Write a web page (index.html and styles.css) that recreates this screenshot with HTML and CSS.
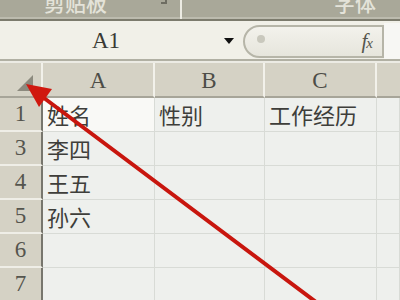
FILE: index.html
```html
<!DOCTYPE html>
<html>
<head>
<meta charset="utf-8">
<link rel="stylesheet" href="styles.css">
</head>
<body>
<div class="page">
  <div class="ribbon">
    <div class="group g1"><span class="glabel">剪贴板</span><span class="launch"></span></div>
    <div class="group g2"><span class="glabel">字体</span></div>
  </div>
  <div class="fbar">
    <div class="namebox"><span class="name">A1</span><span class="drop"></span></div>
    <div class="fxbox"><span class="knob"></span><span class="fx">f<span class="x">x</span></span></div>
    <div class="finput"></div>
  </div>
  <div class="gap"></div>
  <div class="grid">
    <div class="corner"></div>
    <div class="ch">A</div><div class="ch">B</div><div class="ch">C</div><div class="ch last"></div>

    <div class="rh">1</div><div class="c sel">姓名</div><div class="c">性别</div><div class="c">工作经历</div><div class="c"></div>
    <div class="rh">3</div><div class="c">李四</div><div class="c"></div><div class="c"></div><div class="c"></div>
    <div class="rh">4</div><div class="c">王五</div><div class="c"></div><div class="c"></div><div class="c"></div>
    <div class="rh">5</div><div class="c">孙六</div><div class="c"></div><div class="c"></div><div class="c"></div>
    <div class="rh">6</div><div class="c"></div><div class="c"></div><div class="c"></div><div class="c"></div>
    <div class="rh">7</div><div class="c"></div><div class="c"></div><div class="c"></div><div class="c"></div>
  </div>
  <svg class="arrow" width="400" height="300" viewBox="0 0 400 300">
    <line x1="40" y1="95" x2="320" y2="305" stroke="#c8160e" stroke-width="4" stroke-linecap="round"/>
    <polygon points="26,84 52,89 39,107" fill="#d0180f"/>
  </svg>
</div>
</body>
</html>
```
FILE: styles.css
```css
* { box-sizing: border-box; }
html, body { margin: 0; padding: 0; }
body { width: 400px; height: 300px; overflow: hidden; background: #eef0ed; }
.page { position: relative; width: 400px; height: 300px; overflow: hidden; }

.ribbon {
  display: flex;
  height: 21px;
  background: #a9a899;
  border-bottom: 2px solid #7c7b6d;
  box-shadow: inset 0 -2px 0 #bcbbae;
  overflow: hidden;
}
.group { display: flex; align-items: flex-start; height: 19px; overflow: hidden; }
.g1 { width: 182px; padding-left: 44px; border-right: 2px solid #ecebe3; position: relative; }
.g2 { flex: 1; justify-content: flex-end; padding-right: 24px; }
.glabel {
  font-family: "Noto Sans CJK SC", sans-serif;
  font-size: 21px;
  line-height: 22px;
  margin-top: -9px;
  color: #e4e3d9;
  font-weight: 500;
}
.launch {
  position: absolute;
  left: 161px; top: 0;
  width: 6px; height: 4px;
  border-right: 2px solid #6e6d62;
  border-bottom: 2px solid #6e6d62;
}

.fbar {
  display: flex;
  height: 40px;
  background: #f1f0e8;
  border-bottom: 2px solid #b1b0a3;
}
.namebox {
  width: 243px;
  display: flex;
  align-items: center;
  padding-top: 2px;
}
.name {
  width: 210px;
  text-align: center;
  font-family: "Liberation Serif", serif;
  font-size: 23px;
  color: #3a3a34;
  padding-left: 2px;
}
.drop {
  margin-left: 14px;
  width: 0; height: 0;
  border-left: 5px solid transparent;
  border-right: 5px solid transparent;
  border-top: 6px solid #111;
}
.fxbox {
  width: 141px;
  margin: 4px 0 0;
  height: 33px;
  border: 2px solid #b6b5a8;
  border-radius: 17px 0 0 17px;
  background: linear-gradient(#f3f2ec, #e6e5dc);
  display: flex;
  align-items: center;
  justify-content: space-between;
  padding: 0 10px 0 12px;
}
.knob {
  width: 8px; height: 8px; border-radius: 50%;
  background: #c9c8bd;
  margin-top: -6px;
}
.fx {
  font-family: "Liberation Serif", serif;
  font-style: italic;
  font-size: 21px;
  color: #55554d;
  letter-spacing: -1px;
}
.fx .x { font-size: 15px; }
.finput { flex: 1; background: #f7f7f4; margin-top: 2px; }

.gap { height: 2px; background: #ecebe4; }

.grid {
  display: grid;
  grid-template-columns: 43px 112px 110px 112px 23px;
  grid-template-rows: 35px repeat(6, 34px);
}
.corner, .ch {
  background: #d5d2c5;
  border-right: 2px solid #f2f1ea;
  border-bottom: 2px solid #a7a599;
  display: flex;
  align-items: center;
  justify-content: center;
  padding-top: 3px;
  font-family: "Liberation Serif", serif;
  font-size: 23px;
  color: #4d4d47;
}
.ch.last { border-right: none; }
.corner { position: relative; }
.corner::after {
  content: "";
  position: absolute;
  right: 8px; bottom: 5px;
  width: 0; height: 0;
  border-left: 16px solid transparent;
  border-bottom: 16px solid #8c8a7e;
}
.rh {
  background: #d5d2c5;
  border-bottom: 2px solid #efeee7;
  border-right: 2px solid #77766d;
  display: flex;
  align-items: center;
  justify-content: center;
  font-family: "Liberation Serif", serif;
  font-size: 23px;
  color: #55554e;
}
.c {
  background: #eef0ed;
  border-right: 1px solid #d8dbd6;
  border-bottom: 1px solid #d8dbd6;
  font-family: "Noto Sans CJK SC", sans-serif;
  font-size: 22px;
  line-height: 32px;
  color: #3e3e3a;
  padding-left: 4px;
  white-space: nowrap;
  overflow: hidden;
}
.c.sel { background: #f9f9f6; }

.arrow { position: absolute; left: 0; top: 0; }
```
